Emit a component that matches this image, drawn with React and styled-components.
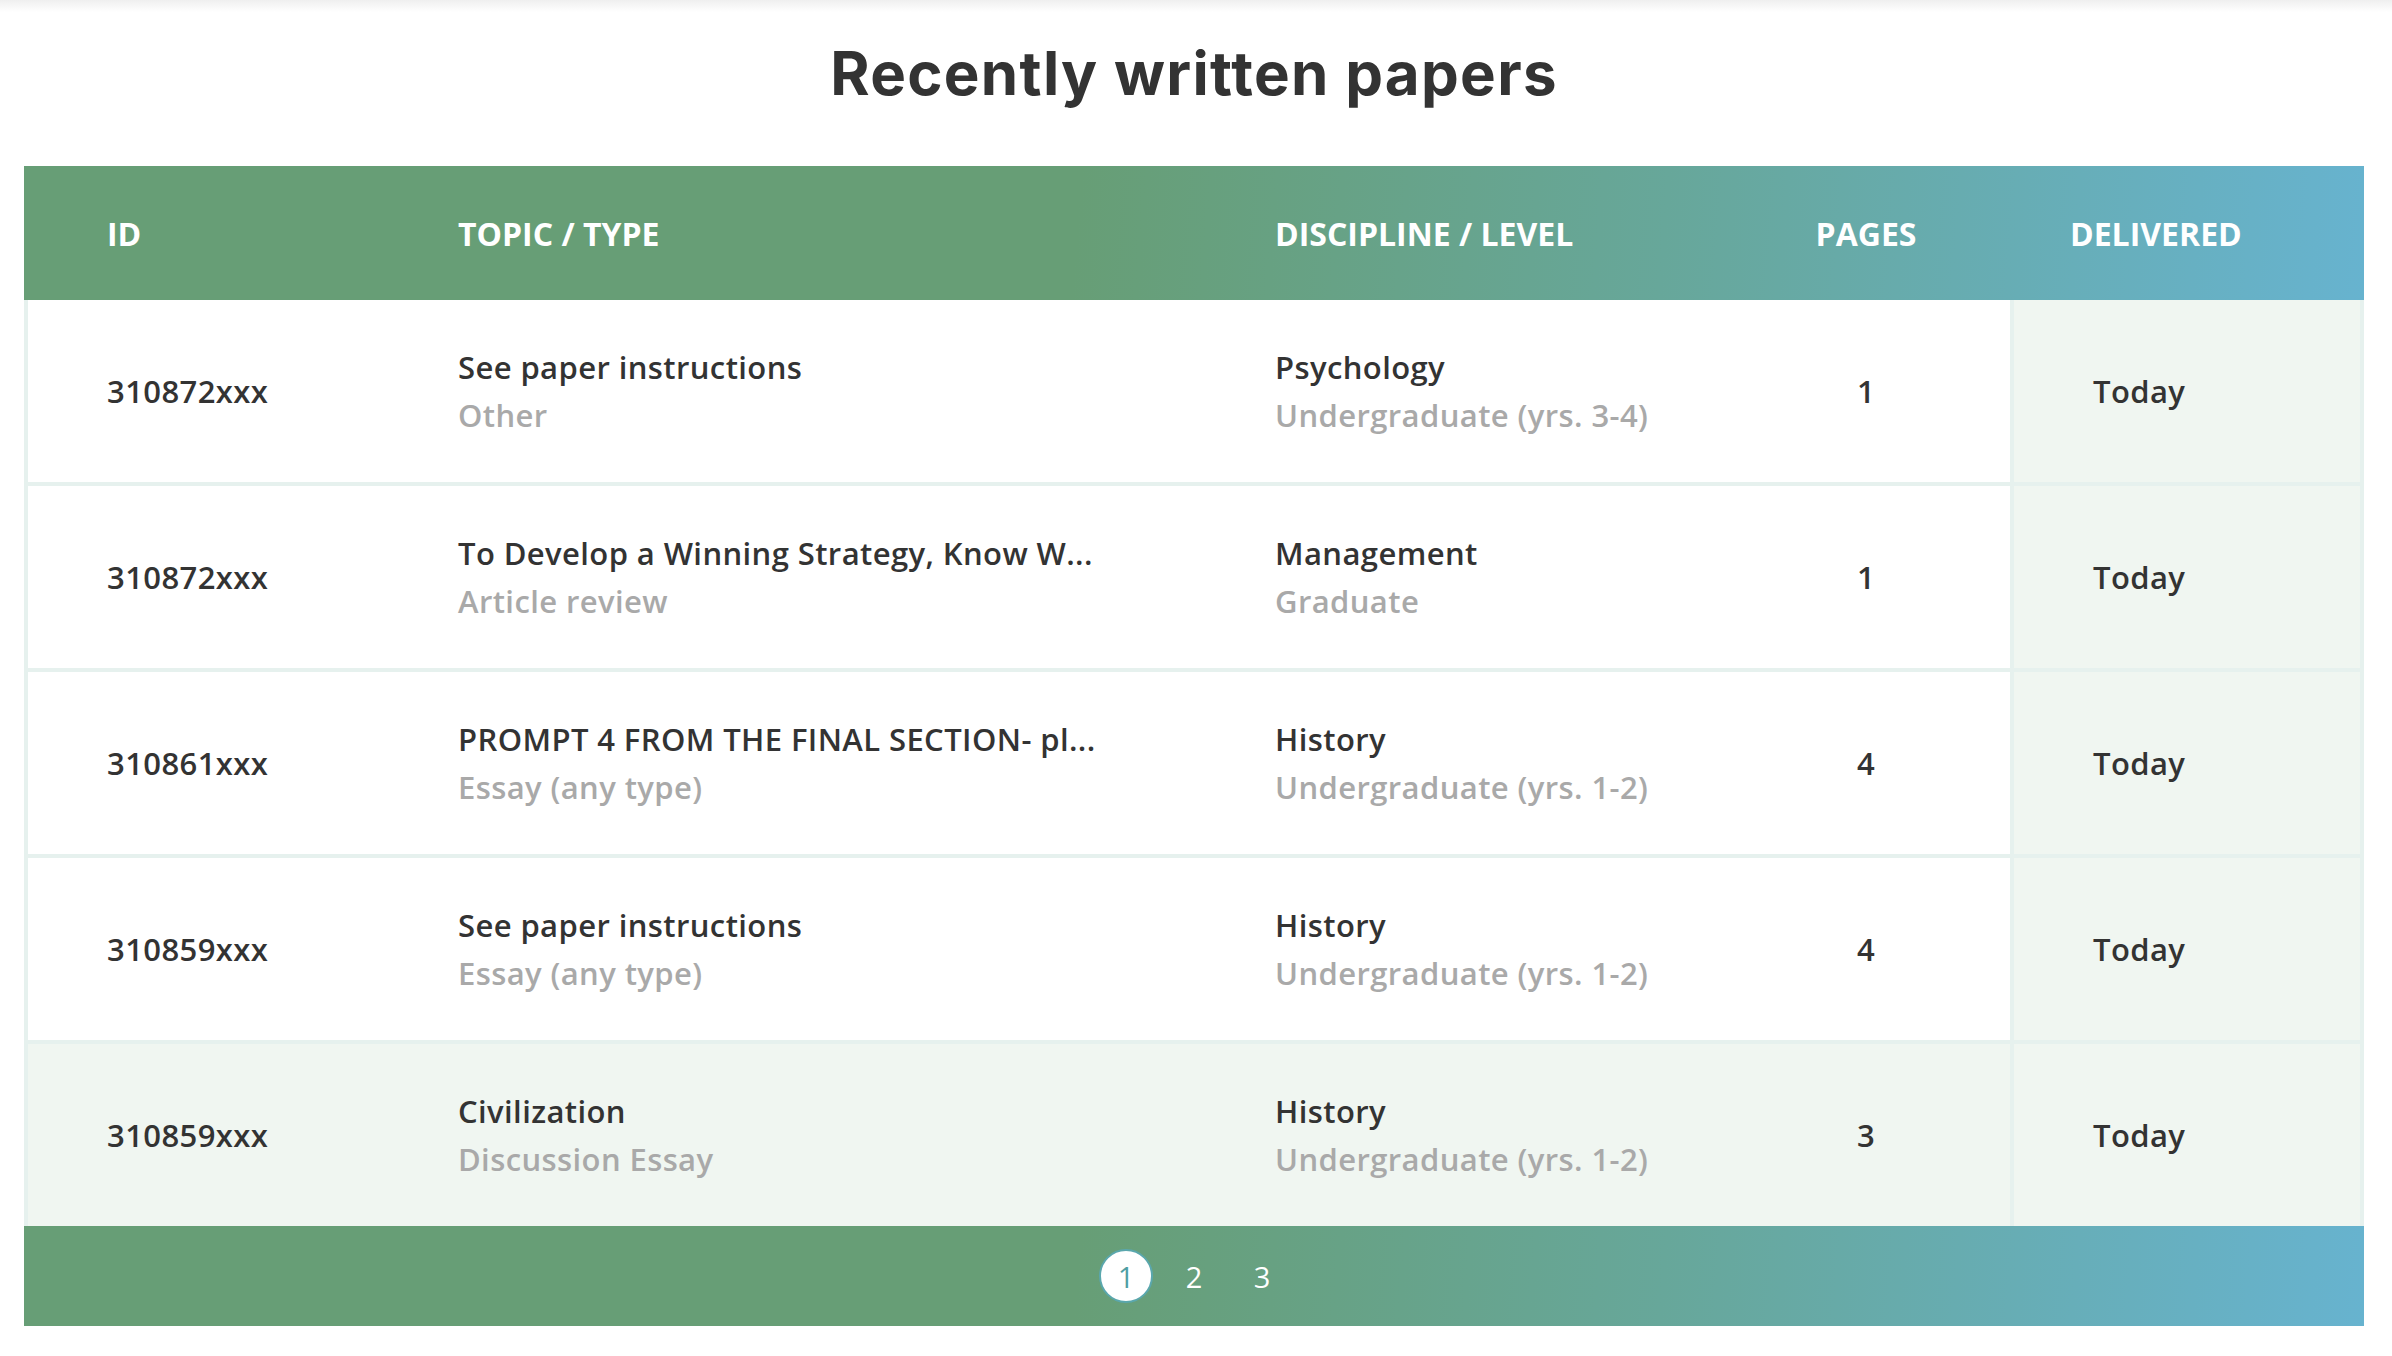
import React from "react";
import styled, { createGlobalStyle } from "styled-components";

const GlobalStyle = createGlobalStyle`
  html, body {
    margin: 0;
    padding: 0;
    background: #fff;
  }
  body {
    font-family: "Open Sans", "Noto Sans", sans-serif;
    color: #333;
  }
`;

const COLUMNS = "430px 817px 447px 288px 1fr";
const MINT = "#e6f1ee";
const PALE = "#f0f6f1";
const BAND = "linear-gradient(95deg, #679e76 0%, #679e76 45%, #67a79a 70%, #67b3cf 100%)";

const papers = [
  {
    id: "310872xxx",
    topic: "See paper instructions",
    type: "Other",
    discipline: "Psychology",
    level: "Undergraduate (yrs. 3-4)",
    pages: 1,
  },
  {
    id: "310872xxx",
    topic: "To Develop a Winning Strategy, Know W...",
    type: "Article review",
    discipline: "Management",
    level: "Graduate",
    pages: 1,
  },
  {
    id: "310861xxx",
    topic: "PROMPT 4 FROM THE FINAL SECTION- pl...",
    type: "Essay (any type)",
    discipline: "History",
    level: "Undergraduate (yrs. 1-2)",
    pages: 4,
  },
  {
    id: "310859xxx",
    topic: "See paper instructions",
    type: "Essay (any type)",
    discipline: "History",
    level: "Undergraduate (yrs. 1-2)",
    pages: 4,
  },
  {
    id: "310859xxx",
    topic: "Civilization",
    type: "Discussion Essay",
    discipline: "History",
    level: "Undergraduate (yrs. 1-2)",
    pages: 3,
  },
];

export default function App() {
  return (
    <>
      <GlobalStyle />
      <TopShade />
      <Section>
        <Title>Recently written papers</Title>
        <Table>
          <HeadRow>
            <HeadCell $pl={79}>ID</HeadCell>
            <HeadCell>Topic / Type</HeadCell>
            <HeadCell>Discipline / Level</HeadCell>
            <HeadCell $center>Pages</HeadCell>
            <HeadCell $pl={60}>Delivered</HeadCell>
          </HeadRow>
          {papers.map((p, i) => (
            <Row key={i} $active={i === papers.length - 1} $last={i === papers.length - 1}>
              <Cell $pl={79}>{p.id}</Cell>
              <Cell>
                <Stack>
                  <Main>{p.topic}</Main>
                  <Sub>{p.type}</Sub>
                </Stack>
              </Cell>
              <Cell>
                <Stack>
                  <Main>{p.discipline}</Main>
                  <Sub>{p.level}</Sub>
                </Stack>
              </Cell>
              <Cell $center>{p.pages}</Cell>
              <DeliveredCell>Today</DeliveredCell>
            </Row>
          ))}
          <Pager>
            {[1, 2, 3].map((n) => (
              <PageDot key={n} $current={n === 1}>
                {n}
              </PageDot>
            ))}
          </Pager>
        </Table>
      </Section>
    </>
  );
}

const TopShade = styled.div`
  height: 12px;
  background: linear-gradient(#efefef, #ffffff);
`;

const Section = styled.section`
  padding: 0 28px 30px 24px;
`;

const Title = styled.h2`
  margin: 26px 0 58px;
  text-align: center;
  font-family: "Inter", "Lato", sans-serif;
  font-weight: 700;
  font-size: 60px;
  line-height: 70px;
  color: #333;
  letter-spacing: 1.3px;
`;

const Table = styled.div`
  display: flex;
  flex-direction: column;
`;

const HeadRow = styled.div`
  display: grid;
  grid-template-columns: ${COLUMNS};
  height: 134px;
  padding: 0 4px;
  align-items: center;
  background: ${BAND};
`;

const HeadCell = styled.div`
  padding-left: ${(p) => (p.$pl != null ? p.$pl : 0)}px;
  text-align: ${(p) => (p.$center ? "center" : "left")};
  color: #fff;
  font-weight: 700;
  font-size: 32px;
  text-transform: uppercase;
`;

const Row = styled.div`
  display: grid;
  grid-template-columns: ${COLUMNS};
  height: 182px;
  border-left: 4px solid ${MINT};
  border-right: 4px solid ${MINT};
  border-bottom: ${(p) => (p.$last ? "none" : `4px solid ${MINT}`)};
  background: ${(p) => (p.$active ? PALE : "#fff")};
`;

const Cell = styled.div`
  display: flex;
  align-items: center;
  justify-content: ${(p) => (p.$center ? "center" : "flex-start")};
  padding-left: ${(p) => (p.$pl != null ? p.$pl : 0)}px;
  font-size: 31px;
  letter-spacing: 0.4px;
  font-weight: 600;
  color: #333;
`;

const DeliveredCell = styled(Cell)`
  border-left: 4px solid ${MINT};
  background: ${PALE};
  padding-left: 79px;
`;

const Stack = styled.div`
  display: flex;
  flex-direction: column;
  line-height: 48px;
`;

const Main = styled.span`
  color: #333;
  white-space: nowrap;
`;

const Sub = styled.span`
  color: #a9a9a9;
  white-space: nowrap;
`;

const Pager = styled.div`
  display: flex;
  justify-content: center;
  align-items: center;
  gap: 14px;
  height: 100px;
  background: ${BAND};
`;

const PageDot = styled.span`
  width: 54px;
  height: 54px;
  box-sizing: border-box;
  border-radius: 50%;
  display: flex;
  align-items: center;
  justify-content: center;
  font-size: 29px;
  font-weight: 400;
  color: ${(p) => (p.$current ? "#4f9ea3" : "#fff")};
  background: ${(p) => (p.$current ? "#fff" : "transparent")};
  border: 2px solid ${(p) => (p.$current ? "#5aa7ad" : "transparent")};
`;
